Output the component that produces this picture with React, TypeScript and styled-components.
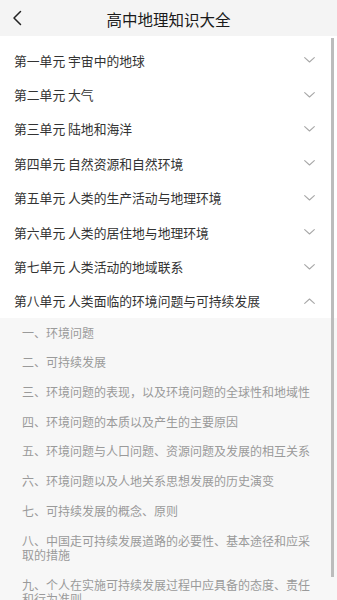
import React, { useState } from "react"
import styled, { createGlobalStyle } from "styled-components"

const GlobalStyle = createGlobalStyle`
  html, body {
    margin: 0;
    padding: 0;
    background: #ffffff;
  }
  body {
    font-family: "Noto Sans CJK SC", "Noto Sans", sans-serif;
  }
`

const units = [
  "第一单元 宇宙中的地球",
  "第二单元 大气",
  "第三单元 陆地和海洋",
  "第四单元 自然资源和自然环境",
  "第五单元 人类的生产活动与地理环境",
  "第六单元 人类的居住地与地理环境",
  "第七单元 人类活动的地域联系",
  "第八单元 人类面临的环境问题与可持续发展",
]

const lessons = [
  "一、环境问题",
  "二、可持续发展",
  "三、环境问题的表现，以及环境问题的全球性和地域性",
  "四、环境问题的本质以及产生的主要原因",
  "五、环境问题与人口问题、资源问题及发展的相互关系",
  "六、环境问题以及人地关系思想发展的历史演变",
  "七、可持续发展的概念、原则",
  "八、中国走可持续发展道路的必要性、基本途径和应采取的措施",
  "九、个人在实施可持续发展过程中应具备的态度、责任和行为准则",
]

const Screen = styled.div`
  position: relative;
  width: 337px;
  height: 600px;
  overflow: hidden;
  background: #ffffff;
`

const Header = styled.header`
  display: flex;
  align-items: center;
  justify-content: center;
  position: relative;
  height: 36px;
  background: #f4f4f4;
`

const BackButton = styled.button`
  position: absolute;
  left: 11px;
  top: 10px;
  display: flex;
  padding: 0;
  border: none;
  background: none;
  color: #222;
`

const Title = styled.h1`
  margin: 2px 0 0;
  font-size: 15.5px;
  font-weight: 400;
  color: #1a1a1a;
`

const List = styled.div`
  display: flex;
  flex-direction: column;
  padding-top: 7px;
`

const UnitRow = styled.div`
  display: flex;
  align-items: center;
  justify-content: space-between;
  height: 34.4px;
  padding: 0 22px 0 14px;
  background: #ffffff;
  cursor: pointer;
`

const UnitName = styled.span`
  font-size: 12.8px;
  color: #333333;
  white-space: nowrap;
`

const Chevron = styled.svg<{ $open: boolean }>`
  width: 11px;
  height: 6px;
  color: #a8a8a8;
  transform: ${({ $open }) => ($open ? "rotate(180deg)" : "none")};
`

const Lessons = styled.div`
  display: flex;
  flex-direction: column;
  background: #f7f7f7;
`

const Lesson = styled.div`
  padding: 7.6px 20px 7.6px 22px;
  font-size: 12px;
  line-height: 14.5px;
  color: #9a9a9a;
`

const ScrollThumb = styled.div`
  position: absolute;
  right: 3px;
  top: 38px;
  width: 3.5px;
  height: 539px;
  background: #bcbcbc;
`

export default function App() {
  const [open, setOpen] = useState(7)

  return (
    <Screen>
      <GlobalStyle />
      <Header>
        <BackButton aria-label="返回">
          <svg width="12" height="16" viewBox="0 0 12 16" fill="none">
            <path d="M9.5 1.5 L3 8 L9.5 14.5" stroke="currentColor" strokeWidth="1.5" strokeLinecap="round" strokeLinejoin="round" />
          </svg>
        </BackButton>
        <Title>高中地理知识大全</Title>
      </Header>
      <List>
        {units.map((unit, index) => (
          <React.Fragment key={unit}>
            <UnitRow onClick={() => setOpen(open === index ? -1 : index)}>
              <UnitName>{unit}</UnitName>
              <Chevron $open={open === index} viewBox="0 0 11 6" fill="none">
                <path d="M0.7 0.7 L5.5 5 L10.3 0.7" stroke="currentColor" strokeWidth="1.1" strokeLinecap="round" strokeLinejoin="round" />
              </Chevron>
            </UnitRow>
            {open === index && (
              <Lessons>
                {lessons.map((lesson) => (
                  <Lesson key={lesson}>{lesson}</Lesson>
                ))}
              </Lessons>
            )}
          </React.Fragment>
        ))}
      </List>
      <ScrollThumb />
    </Screen>
  )
}
